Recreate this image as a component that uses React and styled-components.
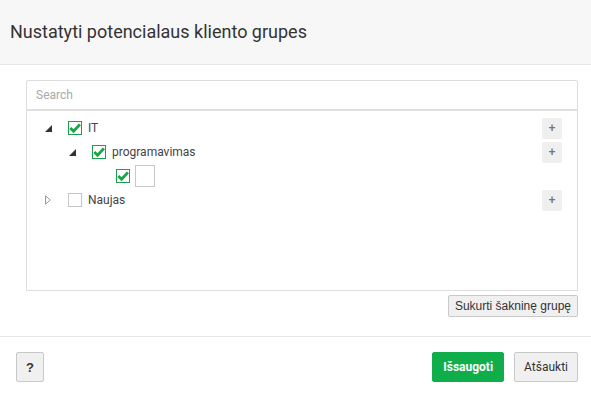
import React from "react";
import styled, { createGlobalStyle } from "styled-components";

const Global = createGlobalStyle`
  html, body { margin: 0; padding: 0; background: #fff; }
  body { font-family: Roboto, "Liberation Sans", Arial, sans-serif; color: #333; }
  * { box-sizing: border-box; }
`;

const Dialog = styled.div`
  width: 591px;
  height: 395px;
  display: flex;
  flex-direction: column;
  background: #fff;
`;

const Header = styled.div`
  height: 65px;
  background: #f7f7f7;
  border-bottom: 1px solid #e5e5e5;
  display: flex;
  align-items: center;
  padding: 0 0 1px 10px;
`;

const Title = styled.h1`
  margin: 0;
  font-family: Roboto, "Liberation Sans", sans-serif;
  font-weight: 400;
  font-size: 18px;
  color: #333;
`;

const Body = styled.div`
  padding: 15px 13px 0 26px;
  height: 272px;
  border-bottom: 1px solid #e5e5e5;
  display: flex;
  flex-direction: column;
`;

const Search = styled.input`
  width: 552px;
  height: 30px;
  border: 1px solid #ddd;
  border-radius: 2px 2px 0 0;
  padding: 0 9px;
  font-family: Roboto, "Liberation Sans", sans-serif;
  font-size: 12px;
  color: #333;
  outline: none;
  &::placeholder { color: #a9a9a9; }
`;

const TreeBox = styled.div`
  width: 552px;
  height: 181px;
  border: 1px solid #ddd;
  border-top-color: #e3e3e3;
  padding-top: 5px;
  padding-right: 15px;
`;

const Row = styled.div`
  height: 24px;
  display: flex;
  align-items: center;
  padding-left: ${(p) => 14 + p.$level * 24}px;
`;

const Toggle = styled.span`
  width: 27px;
  height: 24px;
  display: flex;
  align-items: center;
  padding-left: 4px;
`;

const Box = styled.span`
  width: 14px;
  height: 14px;
  border: 1px solid ${(p) => (p.$checked ? "#1aa04a" : "#c6c6c6")};
  background: #fff;
  display: inline-flex;
  align-items: center;
  justify-content: center;
  flex: none;
`;

const Label = styled.span`
  margin-left: 6px;
  font-family: Roboto, "Liberation Sans", sans-serif;
  font-size: 12px;
  color: #444;
`;

const EditBox = styled.span`
  margin-left: 5px;
  width: 20px;
  height: 22px;
  border: 1px solid #c8c8c8;
  background: #fff;
`;

const Plus = styled.button`
  margin-left: auto;
  width: 20px;
  height: 21px;
  border: none;
  border-radius: 2px;
  background: #efefef;
  color: #777;
  font-family: "Liberation Sans", sans-serif;
  font-size: 12px;
  font-weight: 700;
  padding: 0;
  line-height: 21px;
`;

const RootRow = styled.div`
  display: flex;
  justify-content: flex-end;
  width: 552px;
  margin-top: 4px;
`;

const Btn = styled.button`
  height: ${(p) => p.$h || 30}px;
  padding: 0 ${(p) => p.$px || 10}px;
  border-radius: 2px;
  font-family: ${(p) => p.$font || 'Roboto, "Liberation Sans", sans-serif'};
  font-size: ${(p) => p.$fs || 12}px;
  font-weight: ${(p) => (p.$bold ? 700 : 400)};
  background: ${(p) => (p.$primary ? "#0fae4b" : "#f0f0f0")};
  color: ${(p) => (p.$primary ? "#fff" : "#333")};
  border: 1px solid ${(p) => (p.$primary ? "#0fae4b" : "#c9c9c9")};
  cursor: pointer;
`;

const Footer = styled.div`
  display: flex;
  align-items: flex-start;
  padding: 15px 13px 0 16px;
  gap: 10px;
`;

const Spacer = styled.div`
  flex: 1;
`;

const Check = () => (
  <svg width="12" height="12" viewBox="0 0 12 12">
    <path d="M1.3 6 L4.6 9.3 L10.9 2.4" fill="none" stroke="#17a447" strokeWidth="2.8" />
  </svg>
);

const Open = () => (
  <svg width="7" height="7" viewBox="0 0 7 7">
    <path d="M7 0 L7 7 L0 7 Z" fill="#333" />
  </svg>
);

const Closed = () => (
  <svg width="6" height="10" viewBox="0 0 6 10">
    <path d="M0.5 0.8 L5.3 5 L0.5 9.2 Z" fill="none" stroke="#999" strokeWidth="1" />
  </svg>
);

const nodes = [
  { level: 0, state: "open", checked: true, label: "IT", plus: true },
  { level: 1, state: "open", checked: true, label: "programavimas", plus: true },
  { level: 2, state: "leaf", checked: true, edit: true },
  { level: 0, state: "closed", checked: false, label: "Naujas", plus: true },
];

export default function App() {
  return (
    <>
      <Global />
      <Dialog>
        <Header>
          <Title>Nustatyti potencialaus kliento grupes</Title>
        </Header>
        <Body>
          <Search placeholder="Search" />
          <TreeBox>
            {nodes.map((n, i) => (
              <Row key={i} $level={n.level}>
                <Toggle>
                  {n.state === "open" && <Open />}
                  {n.state === "closed" && <Closed />}
                </Toggle>
                <Box $checked={n.checked}>{n.checked && <Check />}</Box>
                {n.label && <Label>{n.label}</Label>}
                {n.edit && <EditBox />}
                {n.plus && <Plus>+</Plus>}
              </Row>
            ))}
          </TreeBox>
          <RootRow>
            <Btn $h={22} $px={6} $font='"Liberation Sans", Arial, sans-serif'>Sukurti šakninę grupę</Btn>
          </RootRow>
        </Body>
        <Footer>
          <Btn $bold $px={9} $font='"Liberation Sans", Arial, sans-serif' $fs={13}>?</Btn>
          <Spacer />
          <Btn $primary $bold $px={10}>Išsaugoti</Btn>
          <Btn $px={9}>Atšaukti</Btn>
        </Footer>
      </Dialog>
    </>
  );
}
